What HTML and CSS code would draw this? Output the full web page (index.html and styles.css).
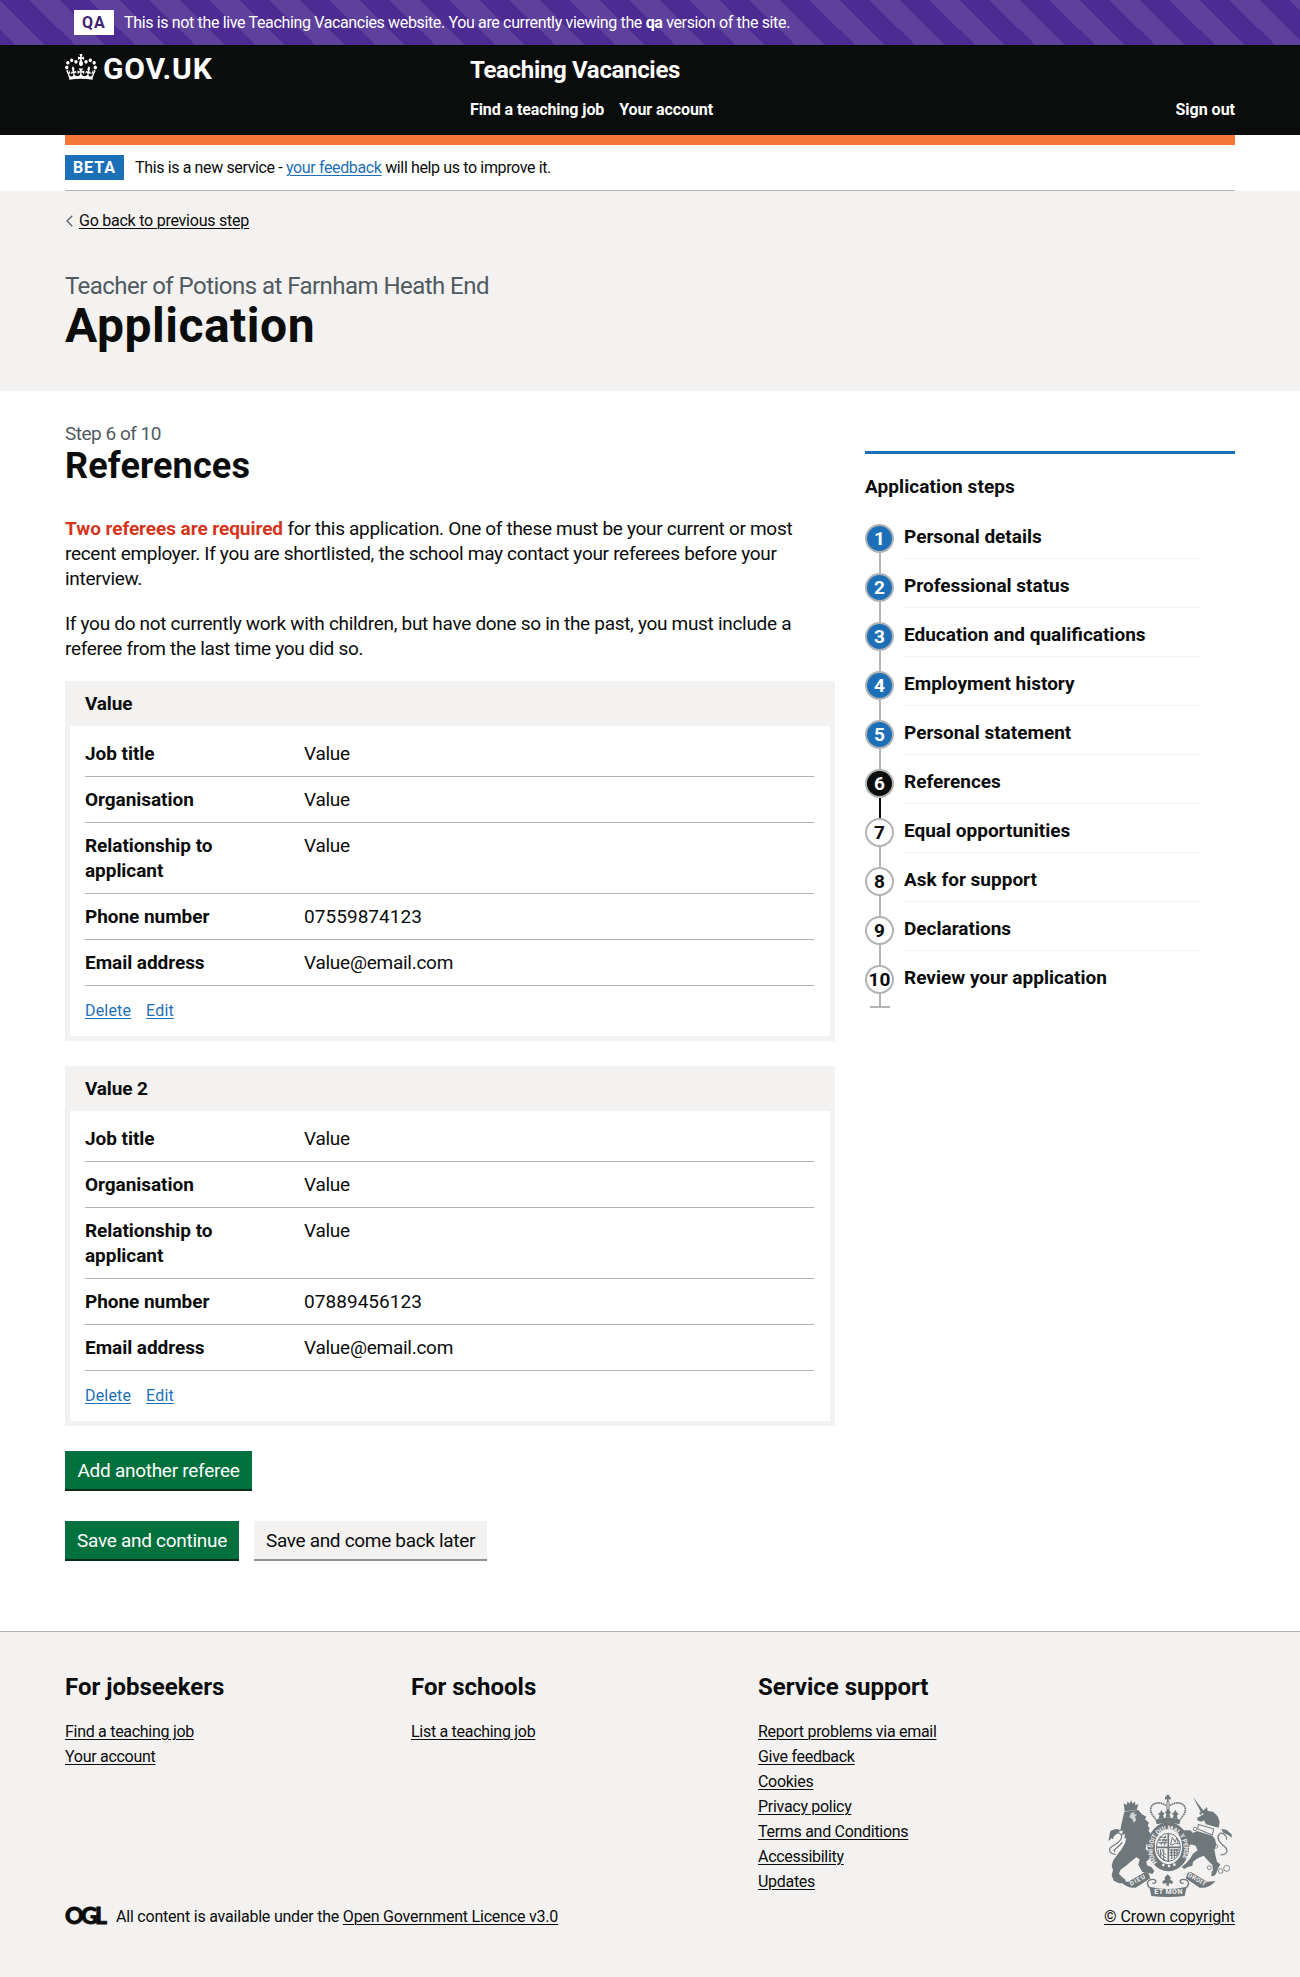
FILE: index.html
```html
<!DOCTYPE html>
<html lang="en">
<head>
<meta charset="utf-8">
<title>References - Application - Teaching Vacancies</title>
<link rel="stylesheet" href="styles.css">
</head>
<body>
<div class="env-banner">
  <div class="env-inner">
    <strong class="tag tag-env">QA</strong>
    <span class="env-text">This is not the live Teaching Vacancies website. You are currently viewing the <strong>qa</strong> version of the site.</span>
  </div>
</div>

<header class="header">
  <div class="container header-inner">
    <a class="logo" href="#">
      <svg class="logo-crown" viewBox="0 0 132 97" preserveAspectRatio="none" aria-hidden="true"><path fill="currentColor" fill-rule="evenodd" d="M25 30.2c3.5 1.5 7.7-.2 9.1-3.7 1.5-3.6-.2-7.8-3.9-9.2-3.6-1.4-7.6.3-9.1 3.9-1.4 3.5.3 7.5 3.9 9zM9 39.5c3.6 1.5 7.8-.2 9.2-3.7 1.5-3.6-.2-7.8-3.9-9.1-3.6-1.5-7.6.2-9.1 3.8-1.4 3.5.3 7.5 3.8 9zM4.4 57.2c3.5 1.5 7.7-.2 9.1-3.8 1.5-3.6-.2-7.7-3.9-9.1-3.5-1.5-7.6.3-9.1 3.8-1.4 3.5.3 7.6 3.9 9.1zm38.3-21.4c3.5 1.5 7.7-.2 9.1-3.8 1.5-3.6-.2-7.7-3.9-9.1-3.6-1.5-7.6.3-9.1 3.8-1.3 3.6.4 7.7 3.9 9.1zm64.4-5.6c-3.6 1.5-7.8-.2-9.1-3.7-1.5-3.6.2-7.8 3.8-9.2 3.6-1.4 7.7.3 9.2 3.9 1.3 3.5-.4 7.5-3.9 9zm15.9 9.3c-3.6 1.5-7.7-.2-9.1-3.7-1.5-3.6.2-7.8 3.7-9.1 3.6-1.5 7.7.2 9.2 3.8 1.5 3.5-.3 7.5-3.8 9zm4.7 17.7c-3.6 1.5-7.8-.2-9.2-3.8-1.5-3.6.2-7.7 3.9-9.1 3.6-1.5 7.7.3 9.2 3.8 1.3 3.5-.4 7.6-3.9 9.1zM89.3 35.8c-3.6 1.5-7.8-.2-9.2-3.8-1.4-3.6.2-7.7 3.9-9.1 3.6-1.5 7.7.3 9.2 3.8 1.4 3.6-.3 7.7-3.9 9.1zM69.7 17.7l8.9 4.7V9.3l-8.9 2.8c-.2-.3-.5-.6-.9-.9L72.4 0H59.6l3.5 11.2c-.3.3-.6.5-.9.9l-8.8-2.8v13.1l8.8-4.7c.3.3.6.7.9.9l-5 15.4v.1c-.2.8-.4 1.6-.4 2.4 0 4.1 3.1 7.5 7 8.1h.2c.3 0 .7.1 1 .1.4 0 .7 0 1-.1h.2c4-.6 7.1-4.1 7.1-8.1 0-.8-.1-1.7-.4-2.4V34l-5.1-15.4c.4-.2.7-.6 1-.9zM66 92.8c16.9 0 32.8 1.1 47.1 3.2 4-16.9 8.9-26.7 14-33.5l-9.6-3.4c1 4.9 1.1 7.2 0 10.2-1.5-1.4-3-4.3-4.2-8.7L108.6 76c2.8-2 5-3.2 7.5-3.3-4.4 9.4-10 11.9-13.6 11.2-4.3-.8-6.3-4.6-5.6-7.9 1-4.7 5.7-5.9 8-.5 4.3-8.7-3-11.4-7.6-8.8 7.1-7.2 7.9-13.5 2.1-21.1-8 6.1-8.1 12.3-4.5 20.8-4.7-5.4-12.1-2.5-9.5 6.2 3.4-5.2 7.9-2 7.2 3.1-.6 4.3-6.4 7.8-13.5 7.2-10.3-.9-10.9-8-11.2-13.8 2.5-.5 7.1 1.8 11 7.3L80.2 60c-4.1 4.4-8 5.3-12.3 5.4 1.4-4.4 8-11.6 8-11.6H55.5s6.4 7.2 7.9 11.6c-4.2-.1-8-1-12.3-5.4l1.4 16.4c3.9-5.5 8.5-7.7 10.9-7.3-.3 5.8-.9 12.8-11.1 13.8-7.2.6-12.9-2.9-13.5-7.2-.7-5 3.8-8.3 7.1-3.1 2.7-8.7-4.6-11.6-9.4-6.2 3.7-8.5 3.6-14.7-4.6-20.8-5.8 7.6-5 13.9 2.2 21.1-4.7-2.6-11.9.1-7.7 8.8 2.3-5.5 7.1-4.2 8.1.5.7 3.3-1.3 7.1-5.7 7.9-3.5.7-9-1.8-13.5-11.2 2.5.1 4.7 1.3 7.5 3.3l-4.7-15.4c-1.2 4.4-2.7 7.2-4.3 8.7-1.1-3-.9-5.3 0-10.2l-9.5 3.4c5 6.9 9.9 16.7 14 33.5 14.8-2.1 30.8-3.2 47.7-3.2z"/></svg>
      <span class="logo-text">GOV.UK</span>
    </a>
    <div class="header-content">
      <a class="service-name" href="#">Teaching Vacancies</a>
      <nav class="header-nav">
        <a href="#">Find a teaching job</a>
        <a href="#">Your account</a>
        <a class="sign-out" href="#">Sign out</a>
      </nav>
    </div>
  </div>
</header>

<div class="container">
  <div class="brand-bar"></div>
  <div class="phase-banner">
    <strong class="tag tag-beta">BETA</strong>
    <span class="phase-text">This is a new service - <a class="link" href="#">your feedback</a> will help us to improve it.</span>
  </div>
</div>

<div class="title-band">
  <div class="container">
    <a class="back-link" href="#"><svg class="back-arrow" viewBox="0 0 7 12" aria-hidden="true"><path d="M6.3.8 1 6l5.3 5.2" fill="none" stroke="#505a5f" stroke-width="1.2"/></svg><span>Go back to previous step</span></a>
    <span class="caption-l">Teacher of Potions at Farnham Heath End</span>
    <h1 class="heading-xl">Application</h1>
  </div>
</div>

<main class="container main">
  <div class="main-column">
    <span class="caption-m">Step 6 of 10</span>
    <h2 class="heading-l">References</h2>
    <p class="body"><strong class="required">Two referees are required</strong> for this application. One of these must be your current or most recent employer. If you are shortlisted, the school may contact your referees before your interview.</p>
    <p class="body">If you do not currently work with children, but have done so in the past, you must include a referee from the last time you did so.</p>

    <section class="card">
      <h3 class="card-title">Value</h3>
      <div class="card-body">
        <dl class="rows">
          <div class="row"><dt>Job title</dt><dd>Value</dd></div>
          <div class="row"><dt>Organisation</dt><dd>Value</dd></div>
          <div class="row"><dt>Relationship to applicant</dt><dd>Value</dd></div>
          <div class="row"><dt>Phone number</dt><dd class="number">07559874123</dd></div>
          <div class="row"><dt>Email address</dt><dd>Value@email.com</dd></div>
        </dl>
        <div class="card-actions"><a class="link" href="#">Delete</a><a class="link" href="#">Edit</a></div>
      </div>
    </section>

    <section class="card">
      <h3 class="card-title">Value 2</h3>
      <div class="card-body">
        <dl class="rows">
          <div class="row"><dt>Job title</dt><dd>Value</dd></div>
          <div class="row"><dt>Organisation</dt><dd>Value</dd></div>
          <div class="row"><dt>Relationship to applicant</dt><dd>Value</dd></div>
          <div class="row"><dt>Phone number</dt><dd class="number">07889456123</dd></div>
          <div class="row"><dt>Email address</dt><dd>Value@email.com</dd></div>
        </dl>
        <div class="card-actions"><a class="link" href="#">Delete</a><a class="link" href="#">Edit</a></div>
      </div>
    </section>

    <div class="button-row"><button class="button button-add">Add another referee</button></div>
    <div class="button-row">
      <button class="button button-continue">Save and continue</button>
      <button class="button button-later">Save and come back later</button>
    </div>
  </div>

  <aside class="steps">
    <h2 class="steps-title">Application steps</h2>
    <ol class="step-list">
      <li class="step done"><span class="step-number">1</span><span class="step-label">Personal details</span></li>
      <li class="step done"><span class="step-number">2</span><span class="step-label">Professional status</span></li>
      <li class="step done"><span class="step-number">3</span><span class="step-label">Education and qualifications</span></li>
      <li class="step done"><span class="step-number">4</span><span class="step-label">Employment history</span></li>
      <li class="step done"><span class="step-number">5</span><span class="step-label">Personal statement</span></li>
      <li class="step current"><span class="step-number">6</span><span class="step-label">References</span></li>
      <li class="step"><span class="step-number">7</span><span class="step-label">Equal opportunities</span></li>
      <li class="step"><span class="step-number">8</span><span class="step-label">Ask for support</span></li>
      <li class="step"><span class="step-number">9</span><span class="step-label">Declarations</span></li>
      <li class="step"><span class="step-number">10</span><span class="step-label">Review your application</span></li>
    </ol>
  </aside>
</main>

<footer class="footer">
  <div class="container footer-inner">
    <div class="footer-nav">
      <section>
        <h2>For jobseekers</h2>
        <ul><li><a href="#">Find a teaching job</a></li><li><a href="#">Your account</a></li></ul>
      </section>
      <section>
        <h2>For schools</h2>
        <ul><li><a href="#">List a teaching job</a></li></ul>
      </section>
      <section>
        <h2>Service support</h2>
        <ul>
          <li><a href="#">Report problems via email</a></li>
          <li><a href="#">Give feedback</a></li>
          <li><a href="#">Cookies</a></li>
          <li><a href="#">Privacy policy</a></li>
          <li><a href="#">Terms and Conditions</a></li>
          <li><a href="#">Accessibility</a></li>
          <li><a href="#">Updates</a></li>
        </ul>
      </section>
    </div>
    <div class="footer-meta">
      <div class="licence"><span class="ogl">OGL</span><span class="licence-text">All content is available under the <a href="#">Open Government Licence v3.0</a></span></div>
      <a class="copyright" href="#">
        <svg class="crest" viewBox="36 30 375 306" aria-hidden="true">
          <g fill="#6f777b" stroke="none">
            <!-- lion -->
            <path d="M86 55l9 5 3-11 6 8 4-12 5 11 7-7 1 12 9-4-5 19-36 3z"/>
            <path d="M88 80l42-5 10 12 14 8-4 8 12 10-4 8 6 10-4 6 8 10-4 6 12 14 4 18-4 10-12-2-4-12-6-4-2 16 12 10 4 12-8 10-6 4 2 12 14 6 8 12-6 8-14-4-16-2-12-22 4-16-10-6-18 14-14 12-16 12-4 12 10 10 10 8-2 10-18 0-16-8-6-16 4-16-4-12 4-16 10-14 14-18 12-20 4-16-6 2 2-14-10 4 4-14-8 2 2-16z"/>
            <path d="M46 138l16-6 16 3-10 8-14 12-14 14z"/>
            <!-- unicorn -->
            <path d="M294 36l32 42-8 4z"/>
            <path d="M312 84l16-10 8-8 2 12 16 2 14 14 6 16-3 18-38-10-6-12-8 4-12-4 0-8 12-6z"/>
            <path d="M310 118l46 14-4 18-44-18z" fill="none" stroke="#6f777b" stroke-width="3"/>
            <path d="M268 136l18 0 8 8 12-6 46 14 8 10 4 18-6 14 4 20 4 16 10 8-6 10-6 16-6 8-10 2 6-18-2-16-12-12-14-16-18 8-14 10-2 12-14 4-10 6-8-6 14-12 12-14 8-14 14-10-6-14-14-4-12 10-12-2-2-12 14-2-4-10-14-2z"/>
            <path d="M378 132l16 2 16 14 0 10-10-8-14-6z"/>
            <!-- central crown -->
            <path d="M213 30h11l-2 6 5-1v9l-6-2v9h-5v-9l-6 2v-9l5 1z"/>
            <path d="M181 104q38-12 76 0l-4 14q-34-9-68 0z"/>
            <path d="M190 102l4-12-6-3 8-5 3-8 4 8 7 5-6 3 3 10zM211 98l4-12-6-3 6-5 4-8 4 8 6 5-6 3 4 12zM233 100l3-10-6-3 7-5 4-8 4 8 7 5-6 3 2 12z"/>
            <!-- motto ribbons -->
            <path d="M74 288l26 2 50-29 10 2 6 17-44 28q-24 4-48-20zM362 288l-26 2-48-29-10 2-6 17 42 28q26 4 48-20z"/>
            <path d="M163 305q56 14 112 0l-6 28q-50 6-100 0z"/>
            <path d="M214 302v-8l-10 3q-5-10 6-12l-1-8 9-9 9 9-1 8q11 2 6 12l-10-3v8z"/>
          </g>
          <g fill="none" stroke="#6f777b">
            <path d="M62 208C42 206 38 192 52 184c18-10 34-24 26-36-8-10-24-2-26 14M60 200c-10-4 12-14 22-28" stroke-width="3.5"/>
            <path d="M376 210c20-2 26-12 14-24-18-14-26-28-18-38 8-8 22 0 24 16" stroke-width="3.5"/>
            <path d="M216 50v36h6V50" stroke-width="3"/>
            <path d="M213 62c-16-14-44-10-46 10-1 14 10 22 15 31M225 62c16-14 44-10 46 10 1 14-10 22-15 31" stroke-width="5" stroke-dasharray="5 1.5"/>
            <ellipse cx="220" cy="185" rx="52" ry="63" stroke-width="21"/>
            <ellipse cx="220" cy="185" rx="38" ry="47" stroke="#f3f2f1" stroke-width="2"/>
            <ellipse cx="220" cy="187" rx="36" ry="42" stroke-width="3"/>
            <path d="M220 146v84M184 187h72" stroke-width="5"/>
            <path d="M190 165h27M190 173h27M194 157h22M198 179l14-26M208 181l6-20M224 195h28M224 203h28M224 211h24M230 192v30M238 192v28M246 192v22" stroke-width="4" stroke-dasharray="9 2"/>
            <path d="M227 179l5-22 8 14 5-12 5 18-10-3-6 6zM190 194c0 18 6 28 22 32M196 193c0 14 6 22 17 25M203 193c0 8 3 13 10 16M197 193v26M206 193v32" stroke-width="3"/>
            <path d="M164 308c-16-16 0-28 14-24 10 4 2 14-6 10M274 308c16-16 0-28-14-24-10 4-2 14 6 10" stroke-width="4"/>
            <circle cx="343" cy="248" r="6" stroke-width="2.5"/><circle cx="356" cy="263" r="6" stroke-width="2.5"/><circle cx="377" cy="258" r="7" stroke-width="2.5"/><circle cx="395" cy="250" r="9" stroke-width="2.5"/>
            <circle cx="300" cy="132" r="5" stroke-width="2.5"/><circle cx="362" cy="184" r="6" stroke-width="2.5"/>
          </g>
          <g fill="#f3f2f1">
            <path d="M108 84l12-3-4 7 10-1-6 8 4 10-8 8-5-12-8-4z" opacity=".75"/>
            <circle cx="322" cy="88" r="3"/>
            <circle cx="205" cy="240" r="4"/><circle cx="222" cy="243" r="4"/><circle cx="238" cy="239" r="4"/>
          </g>
          <defs><path id="garter" d="M186 232A47 57 0 1 1 254 232"/></defs>
          <g class="motto">
            <text font-size="19"><textPath href="#garter" textLength="232">HONI SOIT QUI MAL Y PENSE</textPath></text>
            <text x="178" y="328" font-size="21" textLength="84">ET MON</text>
            <text transform="translate(108 303) rotate(-29)" font-size="19" textLength="50">DIEU</text>
            <text transform="translate(277 274) rotate(30)" font-size="19" textLength="60">DROIT</text>
          </g>
        </svg>
        <span>© Crown copyright</span>
      </a>
    </div>
  </div>
</footer>
</body>
</html>
```
FILE: styles.css
```css
* { box-sizing: border-box; }

body {
  margin: 0;
  background: #fff;
  color: #0b0c0c;
  font-family: Roboto, "Liberation Sans", Arial, sans-serif;
  font-size: 19px;
  line-height: 25px;
}

h1, h2, h3, p, dl, dd, ul, ol { margin: 0; padding: 0; }
ul, ol { list-style: none; }
a { color: inherit; text-decoration-thickness: 1px; text-underline-offset: 2px; }
.link { color: #1d70b8; }

.container { width: 1170px; margin: 0 auto; }

.tag {
  display: inline-block;
  height: 25px;
  padding: 0 8px;
  font-size: 16px;
  letter-spacing: .9px;
}

.env-banner {
  height: 45px;
  background: #4c2c92 linear-gradient(45deg, transparent 25%, #5e419d 25%, #5e419d 50%, transparent 50%, transparent 75%, #5e419d 75%) 0 0 / 60px 60px;
  color: #fff;
  font-size: 16px;
}
.env-inner { display: flex; gap: 10px; padding: 10px 74px; }
.env-text { letter-spacing: -.35px; }
.tag-env { width: 40px; background: #fff; color: #3d2375; }

.header { height: 90px; background: #0b0c0c; color: #fff; }
.header a { color: #fff; text-decoration: none; }
.header-inner { display: grid; grid-template-columns: 405px 1fr; }
.logo { display: flex; align-items: flex-start; gap: 6px; padding-top: 9px; }
.logo-crown { width: 32px; height: 26px; }
.logo-text { font-size: 30px; line-height: 30px; font-weight: 700; letter-spacing: .8px; }
.header-content { padding-top: 10px; font-weight: 700; }
.service-name { display: block; width: max-content; font-size: 24px; line-height: 30px; letter-spacing: -.33px; }
.header-nav { display: flex; gap: 15px; padding-top: 12px; font-size: 16px; letter-spacing: -.09px; }
.sign-out { margin-left: auto; letter-spacing: 0; }

.brand-bar { height: 10px; background: #f47738; }
.phase-banner { display: flex; gap: 11px; height: 46px; padding-top: 10px; border-bottom: 1px solid #b1b4b6; font-size: 16px; }
.phase-text { letter-spacing: -.365px; }
.tag-beta { width: 59px; background: #1d70b8; color: #fff; }

.title-band { height: 200px; background: #f3f2f1; }
.back-link { display: flex; align-items: center; width: max-content; gap: 6px; padding: 17px 0 0 1px; font-size: 16px; letter-spacing: -.24px; }
.back-arrow { width: 7px; height: 12px; }
.caption-l, .caption-m { display: block; color: #505a5f; }
.caption-l { padding-top: 38px; font-size: 24px; line-height: 30px; letter-spacing: -.54px; }
.heading-xl { font-size: 48px; line-height: 50px; letter-spacing: .5px; }

.main { display: grid; grid-template-columns: 770px 370px; column-gap: 30px; height: 1240px; }
.main-column { padding-top: 30px; }
.caption-m { font-size: 19px; letter-spacing: -.49px; }
.heading-l { margin-bottom: 30px; font-size: 36px; line-height: 40px; letter-spacing: .15px; }
.body { width: 745px; margin-bottom: 20px; letter-spacing: -.305px; }
.required { color: #d4351c; letter-spacing: -.06px; }

.card { margin-bottom: 25px; border: 5px solid #f3f2f1; }
.card-title { height: 40px; padding: 5px 15px 0; background: #f3f2f1; font-size: 19px; letter-spacing: -.15px; }
.card-body { height: 310px; padding: 5px 16px 0 15px; }
.row { display: grid; grid-template-columns: 219px 1fr; padding: 10px 0; border-bottom: 1px solid #b1b4b6; }
dt { padding-right: 60px; font-weight: 700; letter-spacing: -.05px; }
dd { letter-spacing: -.26px; }
.number { letter-spacing: .05px; }
.card-actions { display: flex; gap: 15px; padding-top: 12px; font-size: 16px; letter-spacing: .17px; }

.button-row { display: flex; gap: 15px; margin-bottom: 30px; }
.button {
  height: 40px;
  padding: 0 0 2px;
  border: 0;
  background: #00703c;
  box-shadow: inset 0 -2px #002d18;
  color: #fff;
  font: inherit;
  letter-spacing: -.28px;
  white-space: nowrap;
}
.button-add { width: 187px; }
.button-continue { width: 174px; }
.button-later { width: 233px; background: #f3f2f1; color: #0b0c0c; box-shadow: inset 0 -2px #929191; letter-spacing: -.32px; }

.steps { height: max-content; margin-top: 60px; padding-top: 20px; border-top: 3px solid #1d70b8; }
.steps-title { font-size: 19px; letter-spacing: .09px; }
.step-list { padding-top: 25px; }
.step { position: relative; display: flex; gap: 10px; height: 49px; font-weight: 700; }
.step::before { content: ""; position: absolute; left: 14px; top: 29px; width: 2px; height: 20px; background: #b1b4b6; }
.step-number { position: relative; width: 29px; height: 29px; border: 2px solid #b1b4b6; border-radius: 50%; line-height: 26px; text-align: center; background: #fff; }
.done .step-number { background: #1d70b8; color: #fff; }
.current .step-number { background: #0b0c0c; color: #fff; }
.current::before { background: #0b0c0c; }
.step-label { width: 297px; height: 35px; border-bottom: 1px solid #f3f2f1; }
.step:last-child .step-label { border: 0; }
.step:last-child::before { height: 12px; }
.step:last-child::after { content: ""; position: absolute; left: 5px; top: 41px; width: 20px; height: 2px; background: #b1b4b6; }

.footer { height: 346px; background: #f3f2f1; border-top: 1px solid #b1b4b6; font-size: 16px; }
.footer-inner { display: grid; grid-template-rows: 225px auto; padding-top: 40px; }
.footer-nav { display: grid; grid-template-columns: 346px 347px 1fr; letter-spacing: -.29px; }
.footer h2 { margin-bottom: 17px; font-size: 24px; line-height: 30px; letter-spacing: 0; }
.footer-meta { display: flex; justify-content: space-between; align-items: flex-end; height: 32px; }
.licence { display: flex; align-items: center; gap: 13px; }
.licence-text { letter-spacing: -.21px; }
.ogl { width: 38px; margin-top: -3px; font-family: Lato, sans-serif; font-weight: 900; font-size: 23px; letter-spacing: -2.6px; -webkit-text-stroke: .8px #0b0c0c; }
.copyright { display: flex; flex-direction: column; align-items: flex-end; gap: 7px; letter-spacing: -.09px; }
.crest { width: 125px; height: 102px; margin-right: 3px; }
.motto { font-weight: 700; fill: #f3f2f1; letter-spacing: 0; }
```
